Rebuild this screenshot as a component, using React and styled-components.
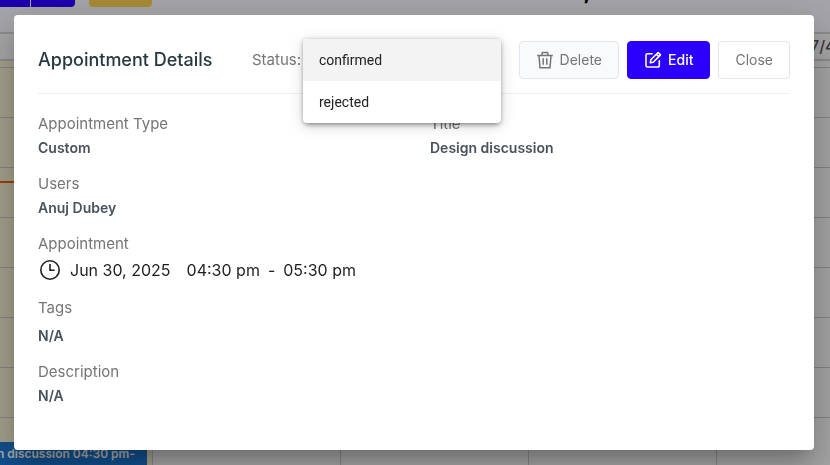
import React, { useState } from 'react';
import styled, { createGlobalStyle } from 'styled-components';

const slots = [1, 2, 3, 4, 5, 6, 7, 8];
const days = ['Mon 6/30', 'Tue 7/1', 'Wed 7/2', 'Thu 7/3', 'Fri 7/4'];

const TrashIcon = () => (
    <svg width="18" height="18" viewBox="0 0 18 18" fill="none" stroke="currentColor" strokeWidth="1.5" aria-hidden="true">
        <path d="M1.2 4.5h15.6M5.8 4.3l.6-2.9h5.2l.6 2.9M3 4.7l1 12h10l1-12M7.2 7.2v6.6M10.8 7.2v6.6" />
    </svg>
);

const EditIcon = () => (
    <svg width="18" height="18" viewBox="0 0 18 18" fill="none" stroke="currentColor" strokeWidth="1.6" strokeLinejoin="round" strokeLinecap="round" aria-hidden="true">
        <path d="M8.2 2.7H3.5a1.5 1.5 0 0 0-1.5 1.5v10.3A1.5 1.5 0 0 0 3.5 16h10.3a1.5 1.5 0 0 0 1.5-1.5V9.8" />
        <path d="M6.3 11.7l.5-2.9 7.3-7.3 2.4 2.4-7.3 7.3zM12.4 3.2l2.4 2.4" />
    </svg>
);

const ClockIcon = () => (
    <svg width="24" height="24" viewBox="0 0 24 24" fill="none" stroke="currentColor" strokeWidth="1.6" aria-hidden="true">
        <circle cx="12" cy="12" r="9.2" />
        <path d="M12 6v6.2h4.6" />
    </svg>
);

const App = () => {
    const [status, setStatus] = useState('confirmed');

    return (
        <>
            <GlobalStyle />
            <Calendar>
                <Toolbar>
                    <ViewGroup>
                        <ViewButton type="button" aria-label="Previous" />
                        <ViewButton type="button" aria-label="Next" />
                    </ViewGroup>
                    <TodayButton type="button" aria-label="Today" />
                    <CalendarTitle>Jul 4, 2025</CalendarTitle>
                </Toolbar>
                <DayHeader>
                    {days.map((day) => <DayName key={day}>{day}</DayName>)}
                </DayHeader>
                <Days>
                    {days.map((day, index) => (
                        <Day key={day} $today={index === 0}>
                            {slots.map((slot) => <Slot key={slot} />)}
                            {index === 0 && (
                                <>
                                    <NowLine />
                                    <Event>Design discussion 04:30 pm-</Event>
                                </>
                            )}
                        </Day>
                    ))}
                </Days>
            </Calendar>
            <Backdrop>
                <Dialog role="dialog" aria-labelledby="dialog-title">
                    <Header>
                        <DialogTitle id="dialog-title">Appointment Details</DialogTitle>
                        <StatusField>
                            <StatusLabel htmlFor="status">Status:</StatusLabel>
                            <StatusMenu id="status" size={2} value={status} onChange={(e) => setStatus(e.target.value)}>
                                <option value="confirmed">confirmed</option>
                                <option value="rejected">rejected</option>
                            </StatusMenu>
                        </StatusField>
                        <Actions>
                            <ActionButton type="button" $muted>
                                <TrashIcon />
                                Delete
                            </ActionButton>
                            <ActionButton type="button" $primary>
                                <EditIcon />
                                Edit
                            </ActionButton>
                            <ActionButton type="button">Close</ActionButton>
                        </Actions>
                    </Header>
                    <Details>
                        <Column>
                            <Field>
                                <Label>Appointment Type</Label>
                                <Value>Custom</Value>
                            </Field>
                            <Field>
                                <Label>Users</Label>
                                <Value>Anuj Dubey</Value>
                            </Field>
                            <Field>
                                <Label>Appointment</Label>
                                <Schedule>
                                    <ClockIcon />
                                    <DateText>Jun 30, 2025</DateText>
                                    <span>04:30 pm</span>
                                    <span>-</span>
                                    <span>05:30 pm</span>
                                </Schedule>
                            </Field>
                            <Field>
                                <Label>Tags</Label>
                                <Value $spaced>N/A</Value>
                            </Field>
                            <Field>
                                <Label>Description</Label>
                                <Value>N/A</Value>
                            </Field>
                        </Column>
                        <Column>
                            <Field>
                                <Label>Title</Label>
                                <Value>Design discussion</Value>
                            </Field>
                        </Column>
                    </Details>
                </Dialog>
            </Backdrop>
        </>
    );
};

const GlobalStyle = createGlobalStyle`
    *{
        box-sizing:border-box;
    }
    body{
        margin:0;
        overflow:hidden;
        background:#f4f3fb;
        font-family:Inter, "Liberation Sans", sans-serif;
    }
    button,select{
        font-family:inherit;
    }
`;

const Calendar = styled.div`
    height:100vh;
    overflow:hidden;
`;

const Toolbar = styled.div`
    display:flex;
    align-items:flex-end;
    gap:14px;
    height:7px;
    margin-bottom:25px;
`;

const ViewGroup = styled.div`
    display:flex;
    gap:1px;
    width:75px;
`;

const ViewButton = styled.button`
    height:38px;
    padding:0;
    border:0;
    background:#2b00ff;
    flex:2;
    &:last-child{
        flex:3;
        border-radius:0 4px 4px 0;
    }
`;

const TodayButton = styled.button`
    width:63px;
    height:38px;
    border:0;
    border-radius:4px;
    background:#f7cf50;
`;

const CalendarTitle = styled.h1`
    flex:1;
    margin:0;
    padding:0 172px 2px 0;
    font-size:24px;
    line-height:28px;
    font-weight:700;
    text-align:right;
`;

const DayHeader = styled.div`
    display:grid;
    grid-template-columns:153px repeat(4, 188px);
    height:29px;
    border-top:2px solid #d0d0d0;
    border-bottom:2px solid #d0d0d0;
    background:#f6f6f6;
`;

const DayName = styled.div`
    color:#555;
    font-size:16px;
    line-height:25px;
    font-weight:500;
    text-align:center;
`;

const Days = styled.div`
    display:grid;
    grid-template-columns:153px repeat(4, 188px);
    padding-top:6px;
    background:linear-gradient(to right, #f3f0d0 152px, #f6f6f6 152px);
`;

const Day = styled.div`
    position:relative;
    border-right:1px solid #cbcbcb;
    background:${(props) => (props.$today ? '#f3f0d0' : '#f6f6f6')};
`;

const Slot = styled.div`
    height:50px;
    border-top:1px solid #c6c6ca;
`;

const NowLine = styled.div`
    position:absolute;
    top:114px;
    left:0;
    right:0;
    height:2px;
    background:#f05e00;
`;

const Event = styled.div`
    position:absolute;
    top:375px;
    right:5px;
    left:0;
    height:60px;
    padding:3px 12px;
    background:#1976d2;
    color:#fff;
    font-size:12px;
    line-height:18px;
    font-weight:600;
    display:flex;
    justify-content:flex-end;
    white-space:nowrap;
`;

const Backdrop = styled.div`
    position:fixed;
    inset:0;
    display:flex;
    padding:15px 16px 15px 14px;
    background:rgba(0,0,0,0.32);
`;

const Dialog = styled.div`
    flex:1;
    padding:26px 24px;
    border-radius:4px;
    background:#fff;
    box-shadow:0 11px 15px -7px rgba(0,0,0,0.2), 0 24px 38px 3px rgba(0,0,0,0.14), 0 9px 46px 8px rgba(0,0,0,0.12);
`;

const Header = styled.div`
    display:flex;
    align-items:center;
    padding-bottom:14px;
    border-bottom:1px solid #f0f0f2;
`;

const DialogTitle = styled.h2`
    width:214px;
    margin:0;
    color:#263840;
    font-size:18px;
    line-height:28px;
    font-weight:500;
`;

const StatusField = styled.div`
    position:relative;
    display:flex;
    align-items:center;
`;

const StatusLabel = styled.label`
    color:#757575;
    font-size:15px;
    line-height:24px;
`;

const StatusMenu = styled.select`
    position:absolute;
    left:51px;
    top:-9px;
    width:198px;
    height:84px;
    padding:0;
    border:0;
    border-radius:4px;
    overflow:hidden;
    outline:none;
    background:#fff;
    color:#222;
    box-shadow:0 5px 5px -3px rgba(0,0,0,0.2), 0 1px 4px rgba(0,0,0,0.3), 0 3px 14px 2px rgba(0,0,0,0.12);
    option{
        height:42px;
        padding:13px 16px 11px;
        color:#222;
        font-family:Roboto, "Liberation Sans", sans-serif;
        font-size:14px;
        line-height:18px;
    }
    option:checked{
        background:#f3f3f3 linear-gradient(#f3f3f3, #f3f3f3);
        color:#222;
    }
`;

const Actions = styled.div`
    display:flex;
    gap:8px;
    margin-left:auto;
`;

const ActionButton = styled.button`
    display:flex;
    align-items:center;
    gap:6px;
    height:38px;
    padding:0 16px;
    border:1px solid ${(props) => (props.$primary ? '#2b00ff' : '#e3e4ec')};
    border-radius:4px;
    background:${(props) => (props.$primary ? '#2b00ff' : props.$muted ? '#f8fafc' : '#fff')};
    color:${(props) => (props.$primary ? '#fff' : '#757575')};
    font-size:14px;
    font-weight:${(props) => (props.$primary ? 500 : 400)};
    line-height:20px;
`;

const Details = styled.div`
    display:grid;
    grid-template-columns:1fr 1fr;
    gap:32px;
    padding-top:18px;
`;

const Column = styled.div`
    display:flex;
    flex-direction:column;
    gap:12px;
`;

const Field = styled.div`
    display:flex;
    flex-direction:column;
`;

const Label = styled.div`
    color:#757575;
    font-size:15px;
    line-height:24px;
`;

const Value = styled.div`
    padding-top:${(props) => (props.$spaced ? '4px' : '0')};
    color:#48525c;
    font-size:14px;
    line-height:24px;
    font-weight:600;
`;

const Schedule = styled.div`
    display:flex;
    align-items:center;
    gap:8px;
    height:28px;
    color:#1f1f1f;
    font-size:16px;
    line-height:24px;
`;

const DateText = styled.span`
    margin-right:8px;
`;

export default App;
